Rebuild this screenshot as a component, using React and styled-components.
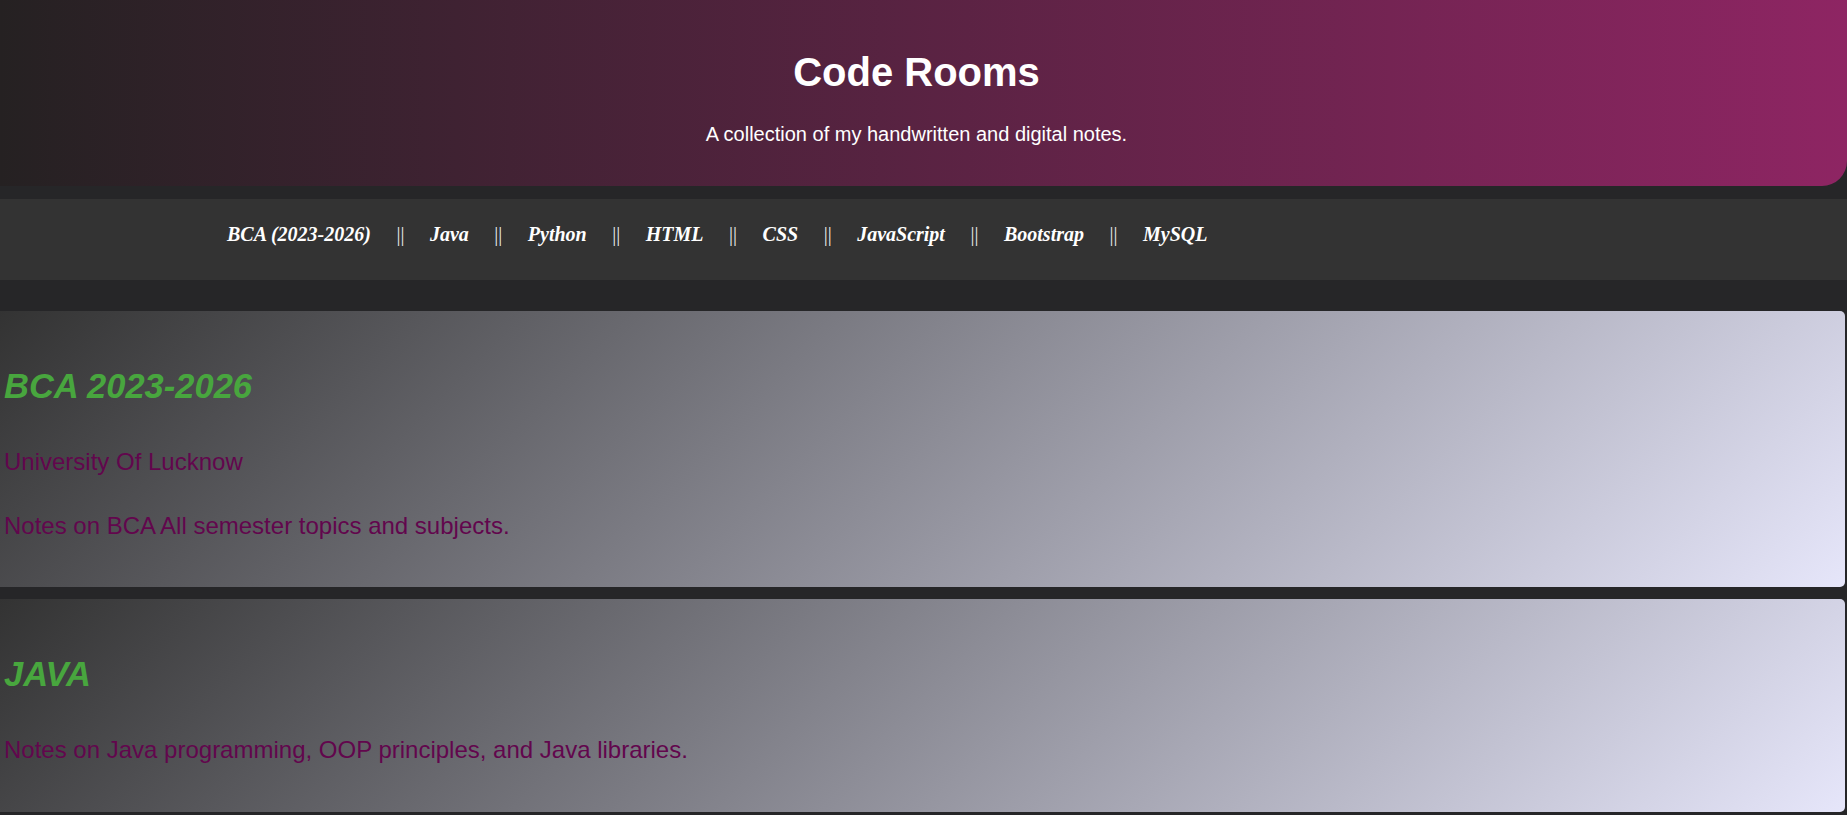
import React from "react";
import styled, { createGlobalStyle } from "styled-components";

const GlobalStyle = createGlobalStyle`
  html, body {
    margin: 0;
    padding: 0;
    background: #262628;
    font-family: "Liberation Sans", Arial, sans-serif;
  }
  * { box-sizing: border-box; }
`;

const Header = styled.header`
  background: linear-gradient(to right, #252122, #8e2563);
  border-bottom-right-radius: 25px;
  padding: 49px 14px 40px 0;
  text-align: center;
  color: #ffffff;
`;

const Title = styled.h1`
  margin: 0 0 28px;
  font-size: 40px;
  line-height: 46px;
  font-weight: bold;
`;

const Tagline = styled.p`
  margin: 0;
  font-size: 20px;
  line-height: 23px;
`;

const Nav = styled.nav`
  margin-top: 13px;
  background: #333333;
  display: flex;
  align-items: baseline;
  padding: 24px 0 34px 227px;
  font-family: "Liberation Serif", "Times New Roman", serif;
  font-size: 20px;
  line-height: 23px;
`;

const NavLink = styled.a`
  color: #ffffff;
  font-style: italic;
  font-weight: bold;
  text-decoration: none;
  white-space: nowrap;
`;

const Separator = styled.span`
  color: #e8e8e8;
  margin: 0 25.5px;
  font-weight: normal;
`;

const Main = styled.main`
  padding-top: 31px;
  display: flex;
  flex-direction: column;
  gap: 12px;
`;

const Card = styled.section`
  margin-right: 2px;
  border-radius: 0 5px 5px 0;
  background: linear-gradient(135deg, #333333, #e6e6fa);
  padding: 55px 4px 48px;
`;

const CardTitle = styled.h2`
  margin: 0 0 42px;
  font-size: 34.5px;
  line-height: 40px;
  font-style: italic;
  font-weight: bold;
  color: #48a63e;
`;

const CardText = styled.p`
  margin: 0;
  font-size: 24px;
  line-height: 27.6px;
  color: #62064d;
  & + & {
    margin-top: 36px;
  }
`;

const links = [
  "BCA (2023-2026)",
  "Java",
  "Python",
  "HTML",
  "CSS",
  "JavaScript",
  "Bootstrap",
  "MySQL",
];

const cards = [
  {
    title: "BCA 2023-2026",
    lines: [
      "University Of Lucknow",
      "Notes on BCA All semester topics and subjects.",
    ],
  },
  {
    title: "JAVA",
    lines: ["Notes on Java programming, OOP principles, and Java libraries."],
  },
];

export default function App() {
  return (
    <>
      <GlobalStyle />
      <Header>
        <Title>Code Rooms</Title>
        <Tagline>A collection of my handwritten and digital notes.</Tagline>
      </Header>
      <Nav>
        {links.map((l, i) => (
          <React.Fragment key={l}>
            {i > 0 && <Separator>||</Separator>}
            <NavLink href="#">{l}</NavLink>
          </React.Fragment>
        ))}
      </Nav>
      <Main>
        {cards.map((c) => (
          <Card key={c.title}>
            <CardTitle>{c.title}</CardTitle>
            {c.lines.map((t) => (
              <CardText key={t}>{t}</CardText>
            ))}
          </Card>
        ))}
      </Main>
    </>
  );
}
